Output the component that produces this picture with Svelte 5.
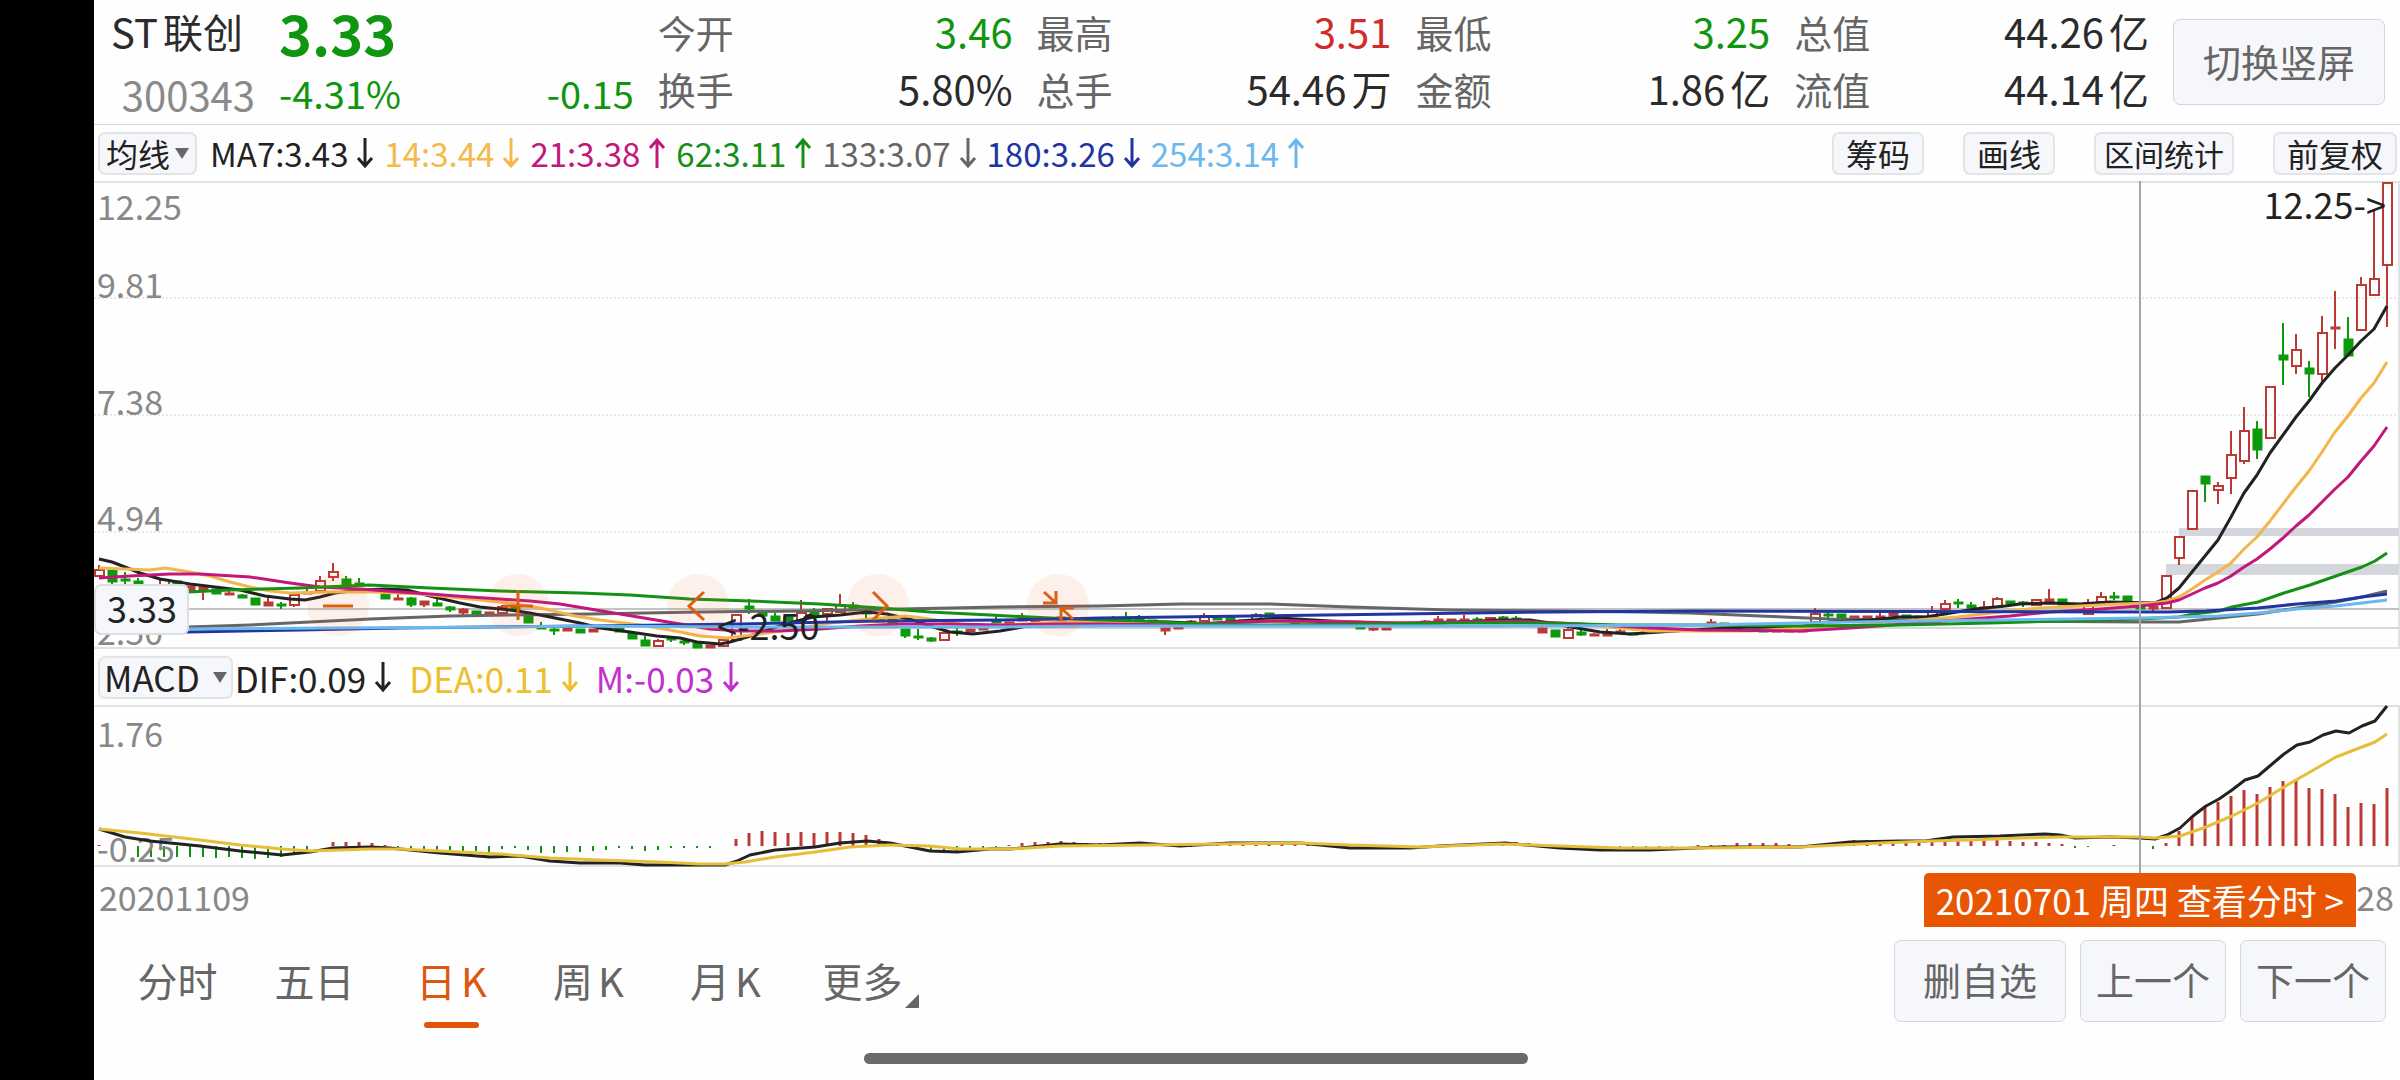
<script lang="ts">
	type Kind = 'up' | 'flat' | 'down';
	// index, kind, body top, body bottom, high, low (plot units)
	type Candle = [number, Kind, number, number, number?, number?];

	const STEP = 13;
	const X0 = 99;
	const ZERO = 846;
	const xAt = (i: number) => X0 + i * STEP;

	const quotes = [
		{ top: ['今开', '3.46', 'green'], bottom: ['换手', '5.80%', ''] },
		{ top: ['最高', '3.51', 'red'], bottom: ['总手', '54.46万', ''] },
		{ top: ['最低', '3.25', 'green'], bottom: ['金额', '1.86亿', ''] },
		{ top: ['总值', '44.26亿', ''], bottom: ['流值', '44.14亿', ''] }
	];

	const averages = [
		{ text: 'MA7:3.43', dir: 'down', color: '#222222' },
		{ text: '14:3.44', dir: 'down', color: '#f5b94a' },
		{ text: '21:3.38', dir: 'up', color: '#c0187c' },
		{ text: '62:3.11', dir: 'up', color: '#149014' },
		{ text: '133:3.07', dir: 'down', color: '#666666' },
		{ text: '180:3.26', dir: 'down', color: '#2035a0' },
		{ text: '254:3.14', dir: 'up', color: '#6cb8ee' }
	];

	const macd = [
		{ text: 'DIF:0.09', color: '#222222' },
		{ text: 'DEA:0.11', color: '#ecc02c' },
		{ text: 'M:-0.03', color: '#c52fd0' }
	];

	const priceTicks = [
		{ label: '12.25', y: 220 },
		{ label: '9.81', y: 298 },
		{ label: '7.38', y: 415 },
		{ label: '4.94', y: 531 },
		{ label: '2.50', y: 645 }
	];

	const candles: Candle[] = [
		[0, 'up', 570, 576, 565], [1, 'down', 570, 582, 570, 584], [2, 'down', 579, 581, 572, 584], [3, 'down', 581, 584, 578],
		[5, 'up', 580, 590], [6, 'down', 581, 590], [7, 'flat', 586, 591], [8, 'flat', 587, 590, 587, 600],
		[9, 'down', 589, 594], [10, 'flat', 593, 595, 590], [11, 'down', 595, 598, 594], [12, 'down', 598, 605],
		[13, 'flat', 602, 606, 596], [14, 'down', 604, 606, 602, 609], [15, 'up', 595, 605, 595, 607], [16, 'flat', 592, 594, 587],
		[17, 'up', 581, 591, 576], [18, 'up', 572, 577, 563, 581], [19, 'down', 579, 586, 576], [20, 'down', 583, 586, 578],
		[22, 'down', 594, 599], [23, 'flat', 598, 600, 594], [24, 'down', 598, 605, 597, 607], [25, 'flat', 601, 605, 601, 607],
		[26, 'down', 603, 606, 599], [27, 'down', 607, 610, 606, 612], [28, 'flat', 609, 613, 608, 617], [29, 'down', 611, 615],
		[30, 'flat', 612, 615], [31, 'up', 607, 613, 605], [32, 'down', 607, 611, 604], [33, 'down', 616, 623],
		[34, 'down', 627, 629, 622], [35, 'down', 629, 631, 625, 635], [36, 'flat', 628, 631], [37, 'down', 629, 633],
		[38, 'flat', 629, 632], [40, 'down', 628, 632], [41, 'down', 633, 639], [42, 'down', 640, 646, 636],
		[43, 'up', 641, 646, 639], [44, 'down', 638, 640, 637, 642], [45, 'down', 641, 643, 638, 645], [46, 'down', 643, 648],
		[47, 'flat', 645, 648], [48, 'up', 640, 646], [49, 'up', 615, 640], [50, 'down', 606, 609, 599, 614],
		[51, 'down', 612, 616], [52, 'down', 616, 621, 613], [53, 'down', 617, 621], [54, 'up', 613, 620, 600],
		[55, 'down', 612, 616, 608], [56, 'up', 609, 614, 608, 621], [57, 'up', 605, 612, 594], [58, 'down', 605, 609, 602],
		[59, 'down', 612, 614, 608, 619], [60, 'down', 618, 622], [61, 'down', 619, 624], [62, 'down', 629, 636, 629, 638],
		[63, 'down', 636, 638, 629, 640], [64, 'down', 638, 641, 637, 642], [65, 'up', 633, 640, 631], [66, 'down', 631, 633, 628, 636],
		[67, 'flat', 629, 632], [68, 'flat', 627, 630, 625], [69, 'down', 621, 623, 615], [70, 'flat', 622, 625],
		[71, 'flat', 618, 621, 613], [72, 'flat', 621, 624], [74, 'flat', 617, 620], [76, 'flat', 618, 620],
		[78, 'flat', 618, 620, 616], [79, 'down', 618, 622, 612], [80, 'down', 619, 623, 615], [81, 'down', 620, 623],
		[82, 'flat', 628, 631, 628, 635], [83, 'flat', 627, 629], [84, 'flat', 621, 623, 620], [85, 'up', 616, 621, 613],
		[86, 'down', 618, 620], [87, 'down', 617, 621], [88, 'flat', 620, 622], [89, 'up', 615, 620, 613],
		[90, 'down', 613, 617], [92, 'down', 622, 624], [94, 'flat', 622, 624], [97, 'down', 627, 629],
		[98, 'flat', 628, 630, 628, 631], [99, 'flat', 628, 630], [102, 'flat', 621, 624, 620], [103, 'flat', 619, 623, 616],
		[104, 'flat', 619, 622], [105, 'flat', 619, 622, 615], [106, 'down', 619, 622, 617], [107, 'up', 618, 621],
		[108, 'down', 617, 620, 616], [109, 'down', 618, 621, 616], [111, 'flat', 628, 633, 627], [112, 'down', 630, 637],
		[113, 'up', 630, 638, 628], [114, 'down', 632, 635, 630, 636], [115, 'flat', 634, 636, 633], [116, 'flat', 632, 636, 629],
		[117, 'flat', 631, 633, 628], [118, 'down', 633, 635], [119, 'flat', 630, 632], [120, 'flat', 630, 632],
		[124, 'flat', 622, 624, 619], [125, 'down', 623, 625], [128, 'down', 630, 632], [129, 'flat', 630, 632],
		[130, 'flat', 630, 632], [131, 'flat', 630, 632], [132, 'up', 614, 622, 608], [133, 'down', 614, 616, 611, 618],
		[134, 'down', 614, 618], [135, 'flat', 616, 619], [136, 'flat', 616, 619], [137, 'flat', 616, 618, 611],
		[138, 'flat', 613, 616, 611], [139, 'down', 615, 618], [140, 'flat', 616, 619], [141, 'up', 611, 617, 606],
		[142, 'up', 604, 609, 600], [143, 'down', 602, 604, 599, 608], [144, 'down', 605, 608, 602], [145, 'flat', 607, 609, 601],
		[146, 'up', 599, 607, 597], [147, 'down', 601, 604], [148, 'down', 602, 604, 601, 607], [149, 'up', 600, 605],
		[150, 'flat', 599, 602, 589], [151, 'down', 599, 605], [153, 'up', 603, 614, 599], [154, 'up', 597, 602, 592],
		[155, 'down', 596, 598, 592, 600], [156, 'down', 596, 602], [157, 'down', 606, 609, 601, 611], [158, 'flat', 606, 609, 605, 611],
		[159, 'up', 576, 608], [160, 'up', 537, 558, 537, 565], [161, 'up', 491, 529], [162, 'down', 476, 484, 476, 502],
		[163, 'up', 486, 490, 482, 504], [164, 'up', 455, 478, 431, 494], [165, 'up', 431, 461, 407, 464], [166, 'down', 429, 450, 421, 459],
		[167, 'up', 387, 438], [168, 'down', 355, 360, 323, 385], [169, 'up', 350, 366, 334, 374], [170, 'down', 368, 374, 361, 397],
		[171, 'up', 333, 374, 316, 382], [172, 'flat', 327, 329, 291, 349], [173, 'down', 339, 356, 317], [174, 'up', 285, 330, 277],
		[175, 'up', 279, 295, 210], [176, 'up', 183, 265, 183, 327]
	];

	const lines = [
		{ color: '#666666', points: '99,630 188,627 250,625 310,622 370,619 450,616 510,615 590,614 700,612 800,611 900,609 1000,607 1100,606 1180,604 1270,604 1350,607 1450,610 1560,611 1640,612 1690,613 1760,616 1830,619 1900,620 2000,621 2140,622 2179,622 2219,618 2258,614 2284,610 2310,606 2336,602 2362,597 2387,591' },
		{ color: '#222222', points: '99,559 112,562 125,567 140,573 160,579 190,584 215,587 240,590 265,596 290,599 305,600 320,597 335,593 360,590 385,589 407,590 430,596 460,603 480,607 510,610 530,613 560,619 580,623 600,628 630,632 657,636 680,638 697,642 720,644 730,642 747,637 770,629 793,622 813,617 840,615 867,612 887,614 913,620 933,627 950,632 973,634 1000,631 1017,628 1037,624 1080,622 1120,621 1170,622 1210,624 1240,621 1280,618 1330,621 1380,623 1420,624 1460,622 1500,620 1530,620 1550,623 1571,627 1600,632 1630,634 1660,632 1690,630 1750,627 1790,628 1830,622 1870,620 1900,617 1925,617 1945,614 1975,609 2005,606 2020,604 2050,603 2080,604 2110,602 2155,603 2167,598 2179,588 2192,572 2205,556 2218,540 2231,517 2244,493 2257,475 2270,453 2283,435 2296,417 2309,401 2322,383 2335,368 2348,355 2361,341 2374,329 2387,306' },
		{ color: '#f2b64c', points: '99,568 125,569 150,570 165,568 190,572 210,576 230,582 250,587 270,591 290,593 330,592 370,592 420,594 470,599 510,603 540,608 575,616 600,620 640,625 670,630 700,636 727,638 760,634 800,628 830,623 870,619 907,616 930,619 960,624 990,626 1040,623 1100,622 1200,624 1270,621 1350,622 1430,623 1500,622 1560,623 1610,627 1650,631 1690,631 1750,631 1803,628 1860,625 1930,619 1957,617 2000,612 2040,608 2080,606 2120,604 2155,603 2167,601 2179,597 2192,589 2205,580 2218,572 2231,563 2244,549 2257,537 2270,521 2283,504 2296,487 2309,471 2322,452 2335,432 2348,416 2361,398 2374,383 2387,362' },
		{ color: '#c0187c', points: '99,578 130,576 170,574 200,574 250,577 290,583 320,587 360,589 400,592 430,594 470,597 500,599 530,601 560,604 590,609 620,614 650,619 680,624 710,629 740,631 780,631 820,629 860,626 900,624 950,624 1000,625 1060,624 1100,624 1180,625 1230,622 1290,621 1350,622 1400,623 1450,622 1520,621 1600,625 1650,628 1700,630 1800,631 1850,628 1920,623 1970,619 2010,616 2050,612 2100,609 2140,606 2167,603 2179,600 2192,594 2205,588 2218,583 2231,576 2244,567 2257,559 2270,549 2283,538 2296,526 2309,515 2322,502 2335,489 2348,477 2361,461 2374,446 2387,427' },
		{ color: '#149014', points: '99,593 188,592 230,590 300,588 370,585 430,588 500,591 580,593 630,595 690,599 750,601 820,604 880,608 930,612 990,615 1050,618 1100,620 1140,621 1200,624 1260,625 1380,624 1450,623 1540,623 1620,625 1700,625 1800,626 1900,625 1990,623 2060,621 2140,619 2179,617 2193,614 2219,611 2232,607 2258,602 2284,593 2310,585 2336,576 2362,567 2375,561 2387,553' },
		{ color: '#2035a0', points: '99,633 188,632 300,630 400,628 590,626 740,624 880,621 1000,620 1060,619 1100,618 1250,616 1400,614 1550,612 1690,611 2167,612 2206,611 2258,608 2297,604 2336,601 2362,597 2387,594' },
		{ color: '#6cb8ee', points: '99,630 188,629 500,627 580,626 740,627 1000,627 1100,626 1500,626 1700,625 1850,622 2000,620 2140,618 2180,617 2219,616 2258,613 2297,609 2336,606 2362,603 2387,600' }
	];

	const dif = '99,829 125,837 150,841 200,846 240,851 282,855 310,852 333,848 370,847 390,848 440,853 490,857 520,856 550,861 580,863 620,863 645,865 725,865 737,861 750,855 775,850 815,847 840,843 867,841 890,843 905,846 930,851 957,852 990,849 1010,849 1060,844 1100,845 1140,843 1180,846 1230,843 1300,843 1350,848 1410,848 1440,846 1505,843 1560,848 1600,850 1650,850 1720,847 1800,847 1850,842 1900,841 1925,841 1953,837 2000,836 2045,834 2060,835 2075,838 2110,837 2140,838 2155,839 2167,835 2180,828 2193,816 2206,806 2219,799 2232,790 2245,780 2258,776 2271,765 2284,754 2297,745 2310,742 2323,735 2336,731 2349,733 2362,726 2375,721 2387,706';
	const dea = '99,829 140,833 200,840 240,845 282,849 310,851 340,850 370,849 400,849 440,851 500,854 550,858 600,860 660,862 700,864 725,864 745,862 775,857 815,852 850,847 890,845 930,846 960,849 1010,849 1060,846 1150,845 1300,843 1350,845 1420,847 1500,844 1560,846 1620,848 1700,848 1800,847 1880,843 1930,841 1970,840 2020,838 2060,837 2100,837 2140,837 2155,838 2180,836 2206,827 2232,816 2258,803 2284,787 2310,772 2336,757 2362,747 2375,742 2387,734';

	// signed bar heights, one per trading day
	const histogram = [
		1, -4, -7, -11, -11, -11, -11, -11, -11, -12, -11, -12, -13, -12, -11, -7, -4, 0, 4, 4, 4, 3, 1, -1, -2, -3, -4, -5, -5, -5,
		-6, -3, -2, -4, -7, -7, -6, -6, -5, -4, -2, -3, -5, -4, -2, -2, -2, -2, 0, 7, 13, 15, 14, 13, 14, 13, 14, 14, 13, 11,
		7, 4, 0, -3, -6, -5, -5, -4, -2, -1, 1, 3, 4, 4, 5, 4, 3, 3, 2, 3, 3, 3, 2, 1, -1, 1, 2, 3, 3, 3,
		3, 3, 3, 2, 1, -1, -2, -3, -3, -3, -3, -2, -1, -1, 1, 2, 3, 3, 3, 4, 3, 2, -1, -4, -4, -4, -4, -4, -3, -3,
		-2, -1, 0, 1, 1, 1, 3, 3, 3, 3, 2, 1, 1, 2, 4, 6, 6, 6, 5, 4, 3, 4, 6, 6, 6, 5, 6, 5, 4, 4,
		3, 2, -2, -1, 0, 1, 0, -2, -3, 3, 15, 30, 40, 44, 50, 56, 52, 59, 65, 67, 58, 57, 52, 39, 43, 42, 58
	];

	const hints = [
		{ label: '缩小', d: 'M16 32H46' },
		{ label: '放大', d: 'M16 32H46M31 16V46' },
		{ label: '左移', d: 'M37 18L22 32L37 46' },
		{ label: '右移', d: 'M26 18L40 32L26 46' },
		{ label: '收起', d: 'M17 18L29 29M29 17V29H16M46 45L34 34M47 34H34V46' }
	];

	const tools = ['筹码', '画线', '区间统计', '前复权'];
	const periods = ['分时', '五日', '日K', '周K', '月K', '更多'];
	let period = $state('日K');
</script>

{#snippet arrow(dir: string)}
	<svg class="arrow" viewBox="0 0 18 32" aria-hidden="true">
		<path d={dir === 'up' ? 'M9 31V3M2 11L9 3L16 11' : 'M9 1V29M2 21L9 29L16 21'} />
	</svg>
{/snippet}

<div class="screen">
	<div class="notch"></div>
	<main>
		<header>
			<div class="identity">
				<div class="name">ST联创</div>
				<div class="code">300343</div>
			</div>
			<div class="last green">
				<div class="price">3.33</div>
				<div class="change"><span>-4.31%</span><span>-0.15</span></div>
			</div>
			{#each quotes as q}
				<dl class="cell">
					{#each [q.top, q.bottom] as [label, value, tone]}
						<div><dt>{label}</dt><dd class={tone}>{value}</dd></div>
					{/each}
				</dl>
			{/each}
			<button class="btn rotate">切换竖屏</button>
		</header>

		<div class="bar">
			<button class="pick">均线<i></i></button>
			<div class="averages">
				{#each averages as a}
					<span class="value" style:color={a.color}>{a.text}{@render arrow(a.dir)}</span>
				{/each}
			</div>
			<div class="tools">
				{#each tools as tool}
					<button class="tool" class:wide={tool.length > 3}>{tool}</button>
				{/each}
			</div>
		</div>

		<div class="charts">
			<div class="plot">
				<svg viewBox="94 181 2306 468" role="img" aria-label="日K线">
					<path class="frame" d="M94 182H2399V648H94" />
					<path class="grid" d="M94 298H2398M94 415H2398M94 532H2398" />
					<rect class="gap" x="2179" y="528" width="220" height="8" />
					<rect class="gap" x="2166" y="564" width="233" height="11" />
					<rect class="gap" x="740" y="627" width="1659" height="2" />
					{#each priceTicks as tick}
						<text class="axis" x="97" y={tick.y}>{tick.label}</text>
					{/each}
					<path class="cross" d="M94 609H2399" />
					{#each candles as [i, kind, top, bottom, high = top, low = bottom]}
						<g class={kind}>
							<path d="M{xAt(i)} {high}V{top}M{xAt(i)} {bottom}V{low}" />
							<rect x={xAt(i) - 4} y={top} width="9" height={bottom - top} />
						</g>
					{/each}
					{#each lines as line}
						<polyline points={line.points} stroke={line.color} />
					{/each}
					<text class="mark" x="717" y="640">&lt;-2.50</text>
					<text class="mark" x="2386" y="219" text-anchor="end">12.25-&gt;</text>
					<rect class="tag" x="95" y="585" width="93" height="49" rx="6" />
					<text class="mark" x="142" y="623" text-anchor="middle">3.33</text>
				</svg>
				<div class="hints">
					{#each hints as hint}
						<button aria-label={hint.label}>
							<svg viewBox="0 0 62 62"><path d={hint.d} /></svg>
						</button>
					{/each}
				</div>
			</div>

			<div class="bar macd">
				<button class="pick">MACD<i></i></button>
				<div class="averages">
					{#each macd as m}
						<span class="value" style:color={m.color}>{m.text}{@render arrow('down')}</span>
					{/each}
				</div>
			</div>

			<svg class="macd-plot" viewBox="94 705 2306 162" role="img" aria-label="MACD">
				<path class="frame" d="M94 706H2399V866H94" />
				{#each histogram as h, i}
					{#if h}
						<path class={h > 0 ? 'bar-up' : 'bar-down'} d="M{xAt(i)} {ZERO}V{ZERO - h}" />
					{/if}
				{/each}
				<text class="axis" x="97" y="747">1.76</text>
				<text class="axis" x="97" y="862">-0.25</text>
				<polyline points={dif} stroke="#222222" />
				<polyline points={dea} stroke="#e6bf3a" />
			</svg>
			<div class="cursor"></div>
		</div>

		<div class="dates">
			<span>20201109</span>
			<span>20210728</span>
			<button class="badge">20210701 周四 查看分时 &gt;</button>
		</div>

		<footer>
			<nav>
				{#each periods as p}
					<button class:active={p === period} class:more={p === '更多'} onclick={() => (period = p)}>{p}</button>
				{/each}
			</nav>
			<div class="actions">
				<button class="btn remove">删自选</button>
				<button class="btn">上一个</button>
				<button class="btn">下一个</button>
			</div>
		</footer>
	</main>
	<div class="home"></div>
</div>

<style>
	:global(body) {
		background: #fff;
	}

	.screen {
		position: relative;
		display: flex;
		min-height: 100vh;
		background: #fefefe;
		color: #2b2b2b;
		font-family: 'Noto Sans CJK SC', 'Noto Sans', sans-serif;
		text-autospace: normal;
	}

	.notch {
		flex: 0 0 94px;
		background: #000;
	}

	main {
		flex: 1;
		min-width: 0;
		white-space: nowrap;
	}

	button {
		margin: 0;
		padding: 0;
		border: 0;
		background: none;
		color: inherit;
		font: inherit;
		cursor: pointer;
	}

	.green { color: #109510; }
	.red { color: #d02c2c; }

	header {
		display: flex;
		align-items: flex-start;
		gap: 24px;
		height: 121px;
		padding: 3px 15px 0 0;
		border-bottom: 1px solid #d8d8d8;
		font-size: 40px;
		line-height: 57px;
	}

	.identity {
		width: 161px;
		text-align: right;
	}

	.name {
		padding-right: 12px;
	}

	.code {
		margin-top: 6px;
		color: #8a8a8a;
	}

	.last,
	.cell {
		flex: 1;
		margin: 0;
	}

	.price {
		font-size: 56px;
		font-weight: 700;
	}

	.change {
		display: flex;
		justify-content: space-between;
		margin-top: 4px;
		font-size: 38px;
	}

	.cell div {
		display: flex;
		justify-content: space-between;
	}

	dt {
		color: #666;
		font-size: 38px;
	}

	dd {
		margin: 0;
	}

	.btn {
		box-sizing: border-box;
		height: 82px;
		padding: 0 15px 4px;
		border: 1px solid #d3d6dc;
		border-radius: 7px;
		background: #f6f7fa;
		color: #666;
		font-size: 38px;
		line-height: 50px;
	}

	.rotate {
		height: 86px;
		margin-top: 16px;
		padding: 0 29px 2px;
	}

	.bar {
		display: flex;
		align-items: center;
		height: 56px;
		padding: 0 3px 0 4px;
		font-size: 33px;
	}

	.pick,
	.tool {
		box-sizing: border-box;
		height: 43px;
		border: 2px solid #e2e4e8;
		border-radius: 7px;
		background: #f6f7fa;
		color: #222;
		font-size: 32px;
		line-height: 36px;
	}

	.pick {
		display: flex;
		align-items: center;
		gap: 5px;
		padding: 0 6px;
	}

	.pick i {
		border: 7px solid transparent;
		border-top: 11px solid #666;
		border-bottom: 0;
	}

	.averages {
		display: flex;
		gap: 10px;
		margin-left: 13px;
	}

	.value {
		display: flex;
		align-items: center;
		gap: 8px;
	}

	.arrow {
		width: 18px;
		height: 32px;
		fill: none;
		stroke: currentColor;
		stroke-width: 3;
	}

	.tools {
		display: flex;
		gap: 39px;
		margin-left: auto;
	}

	.tool {
		padding: 0 12px;
	}

	.tool.wide {
		padding: 0 8px;
		font-size: 30px;
	}

	.macd {
		font-size: 35px;
	}

	.macd .pick {
		gap: 13px;
		padding: 0 4px;
		font-size: 35px;
	}

	.macd .averages {
		gap: 17px;
		margin-left: 2px;
	}

	.charts,
	.plot {
		position: relative;
	}

	.plot > svg,
	.macd-plot {
		display: block;
		width: 100%;
		height: auto;
	}

	polyline {
		fill: none;
		stroke-width: 3;
		stroke-linejoin: round;
	}

	.frame {
		fill: none;
		stroke: #e2e2e2;
		stroke-width: 2;
	}

	.grid {
		stroke: #d0d0d0;
		stroke-dasharray: 2 2;
	}

	.gap {
		fill: #d3d6da;
	}

	.cross {
		stroke: #888;
		stroke-width: 1;
	}

	.axis {
		fill: #888;
		font-size: 34px;
	}

	.mark {
		fill: #222;
		font-size: 36px;
	}

	.tag {
		fill: #f6f7fa;
		stroke: #dcdee3;
		stroke-width: 2;
	}

	.up,
	.flat {
		fill: none;
		stroke: #bb3a36;
		stroke-width: 2;
	}

	.flat {
		fill: #bb3a36;
	}

	.down {
		fill: #0a9a0a;
		stroke: #0a9a0a;
		stroke-width: 2;
	}

	.down rect,
	.flat rect {
		stroke-width: 1;
	}

	.bar-up {
		stroke: #bb3a36;
		stroke-width: 3;
	}

	.bar-down {
		stroke: #0f930f;
		stroke-width: 2;
	}

	.hints {
		position: absolute;
		top: 84%;
		left: 213px;
		display: flex;
		gap: 118px;
	}

	.hints button {
		width: 62px;
		height: 62px;
		border-radius: 50%;
		background: rgba(240, 100, 30, 0.09);
	}

	.hints svg {
		display: block;
		fill: none;
		stroke: #dc5f12;
		stroke-width: 3;
	}

	.cursor {
		position: absolute;
		top: 0;
		bottom: -6px;
		left: 88.7%;
		width: 2px;
		background: #a6a6a6;
	}

	.dates {
		position: relative;
		display: flex;
		justify-content: space-between;
		height: 63px;
		padding: 0 6px 0 5px;
		color: #888;
		font-size: 34px;
		line-height: 60px;
	}

	.badge {
		position: absolute;
		top: 6px;
		right: 44px;
		height: 54px;
		padding: 0 12px;
		border-radius: 5px 5px 0 0;
		background: #e85503;
		color: #fff;
		font-size: 35px;
		line-height: 54px;
	}

	footer {
		display: flex;
		justify-content: space-between;
		padding: 10px 14px 0 15px;
	}

	nav {
		display: flex;
	}

	nav button {
		position: relative;
		width: 137px;
		height: 88px;
		padding-bottom: 8px;
		color: #666;
		font-size: 40px;
		line-height: 74px;
	}

	nav .active {
		color: #dd5710;
	}

	nav .active::after {
		content: '';
		position: absolute;
		bottom: 0;
		left: 41px;
		width: 55px;
		height: 6px;
		border-radius: 3px;
		background: #e25509;
	}

	nav .more::after {
		content: '';
		position: absolute;
		right: 12px;
		bottom: 20px;
		border-bottom: 14px solid #666;
		border-left: 14px solid transparent;
	}

	.actions {
		display: flex;
		gap: 14px;
	}

	.remove {
		padding: 0 28px 4px;
	}

	.home {
		position: absolute;
		bottom: 16px;
		left: 36%;
		width: 664px;
		height: 11px;
		border-radius: 6px;
		background: #6a6a6a;
	}
</style>
